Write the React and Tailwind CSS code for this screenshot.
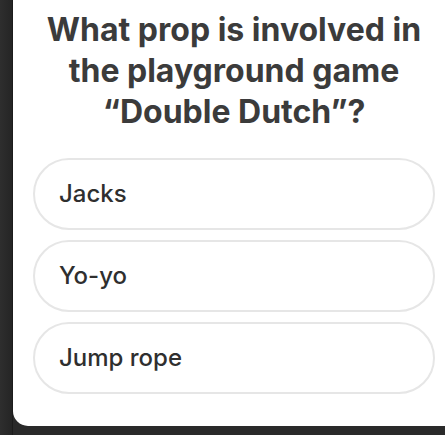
import React from 'react';

const options = ['Jacks', 'Yo-yo', 'Jump rope'];

const App = () => {
  return (
    <div className="w-[445px] h-[435px] overflow-hidden bg-[#2a2a2a] flex items-start">
      {/* left edge strip */}
      <div className="w-[13px] h-full bg-gradient-to-r from-[#2e2e2e] to-[#252525] border-r border-[#1c1c1c]" />

      {/* card */}
      <div className="flex-1 h-[426px] bg-white rounded-bl-[15px] pl-[20px] pr-[10px] pt-[9px] flex flex-col" style={{ fontFamily: 'Inter, "Noto Sans", sans-serif' }}>
        <h1 className="text-center text-[32px] leading-[41px] font-bold text-[#3b3b3b]">
          What prop is involved in
          <br />
          the playground game
          <br />
          “Double Dutch”?
        </h1>

        <div className="mt-[26px] flex flex-col gap-[10px]">
          {options.map((opt) => (
            <button
              key={opt}
              className="h-[72px] w-full rounded-full border-2 border-[#e6e6e6] bg-white pl-[24px] text-left text-[24px] font-medium text-[#2f2f2f]"
            >
              {opt}
            </button>
          ))}
        </div>
      </div>
    </div>
  );
};

export default App;
